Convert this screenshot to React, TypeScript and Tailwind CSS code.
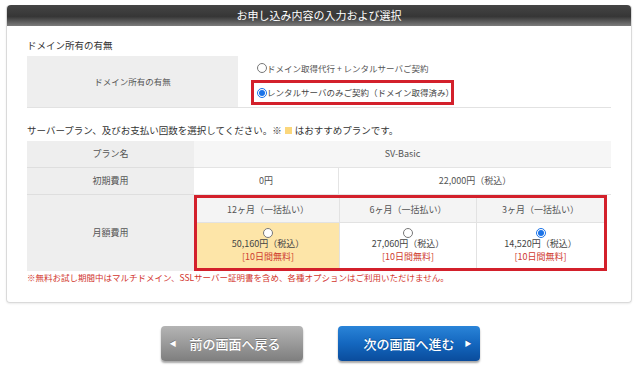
import React from 'react';

const FONT = "font-['Noto_Sans_CJK_JP','Noto_Sans',sans-serif]";

function Radio({ checked = false }: { checked?: boolean }) {
  return checked ? (
    <span className="inline-flex h-[10px] w-[10px] shrink-0 items-center justify-center rounded-full border border-[#1a73e8] bg-white">
      <span className="h-[6px] w-[6px] rounded-full bg-[#1a73e8]" />
    </span>
  ) : (
    <span className="inline-block h-[10px] w-[10px] shrink-0 rounded-full border border-[#777] bg-white" />
  );
}

type Plan = { term: string; price: string; checked?: boolean; recommended?: boolean };

const plans: Plan[] = [
  { term: '12ヶ月（一括払い）', price: '50,160円（税込）', recommended: true },
  { term: '6ヶ月（一括払い）', price: '27,060円（税込）' },
  { term: '3ヶ月（一括払い）', price: '14,520円（税込）', checked: true },
];

export default function App() {
  return (
    <div className={`h-[366px] w-[640px] overflow-hidden bg-white ${FONT}`}>
      <div className="ml-[6px] mt-[5px] h-[298px] w-[626px] rounded-[4px] border border-t-0 border-[#dadada] shadow-[0_1px_2px_rgba(0,0,0,0.08)]">
        <div className="h-[21px] rounded-t-[4px] bg-[linear-gradient(to_bottom,#454545_0%,#363636_55%,#7c7c7c_100%)] text-center text-[11px] leading-[21px] text-white">
          お申し込み内容の入力および選択
        </div>

        <div className="px-[20px]">
          <div className="mt-[12px] text-[9.5px] leading-[14px] text-[#333]">ドメイン所有の有無</div>

          <div className="mt-[4px] grid grid-cols-[211px_1fr] border-b border-[#e2e2e2] text-[8.5px] text-[#555]">
            <div className="flex items-center justify-center bg-[#eeeeee]">ドメイン所有の有無</div>
            <div className="flex flex-col">
              <div className="flex h-[24px] items-center whitespace-nowrap pl-[19px]">
                <Radio />
                <span>ドメイン取得代行 + レンタルサーバご契約</span>
              </div>
              <div className="pl-[13px]">
                <div className="flex h-[25px] w-[203px] items-center whitespace-nowrap border-[3px] border-[#d3202b] px-[3px]">
                  <Radio checked />
                  <span className="text-[#444]">レンタルサーバのみご契約（ドメイン取得済み）</span>
                </div>
              </div>
              <div className="h-[2px]" />
            </div>
          </div>

          <div className="mt-[15px] flex items-center whitespace-nowrap text-[9.5px] leading-[14px] text-[#333]">
            サーバープラン、及びお支払い回数を選択してください。※
            <span className="mx-[3px] inline-block h-[7px] w-[7px] bg-[#fbd77c]" />
            はおすすめプランです。
          </div>

          <div className="mt-[4px] grid grid-cols-[167px_1fr] text-[9px] text-[#555]">
            <div className="flex h-[27px] items-center justify-center border-b border-[#dedede] bg-[#eeeeee]">プラン名</div>
            <div className="flex h-[27px] items-center justify-center border-b border-[#e4e4e4] bg-[#f6f6f6]">SV-Basic</div>

            <div className="flex h-[27px] items-center justify-center border-b border-[#dedede] bg-[#eeeeee]">初期費用</div>
            <div className="flex h-[27px] border-b border-[#e4e4e4]">
              <div className="flex w-[145px] items-center justify-center border-r border-[#e4e4e4]">0円</div>
              <div className="flex flex-1 items-center justify-center">22,000円（税込）</div>
            </div>

            <div className="flex h-[76px] items-center justify-center bg-[#eeeeee]">月額費用</div>
            <div className="pr-[4px]">
              <div className="grid h-[76px] grid-cols-[142px_137px_1fr] border-[3px] border-[#d3202b]">
                {plans.map((p, i) => (
                  <div key={p.term} className={`flex flex-col ${i > 0 ? 'border-l border-[#e2e2e2]' : ''}`}>
                    <div className="flex h-[25px] items-center justify-center border-b border-[#e2e2e2] bg-[#f4f4f4]">
                      {p.term}
                    </div>
                    <div className={`flex flex-1 flex-col items-center pt-[5px] ${p.recommended ? 'bg-[#fde5a8]' : 'bg-white'}`}>
                      <Radio checked={p.checked} />
                      <div className="leading-[12px] text-[#444]">{p.price}</div>
                      <div className="leading-[13px] text-[#cf3b30]">[10日間無料]</div>
                    </div>
                  </div>
                ))}
              </div>
            </div>
          </div>

          <div className="whitespace-nowrap text-[8.5px] leading-[13px] text-[#d2352d]">
            ※無料お試し期間中はマルチドメイン、SSLサーバー証明書を含め、各種オプションはご利用いただけません。
          </div>
        </div>
      </div>

      <div className="mt-[23px] flex justify-center gap-[35px]">
        <button className="relative flex h-[35px] w-[142px] items-center rounded-[4px] bg-[linear-gradient(to_bottom,#b4b4b4_0%,#9a9a9a_50%,#7e7e7e_100%)] pl-[29px] text-[13px] font-medium text-white shadow-[0_2px_2px_rgba(0,0,0,0.35)] [text-shadow:0_-1px_0_rgba(0,0,0,0.25)]">
          <span className="absolute left-[9px] text-[7px]">◀</span>
          前の画面へ戻る
        </button>
        <button className="relative flex h-[35px] w-[142px] items-center rounded-[4px] bg-[linear-gradient(to_bottom,#2a84d8_0%,#1467bf_50%,#0a4c9c_100%)] pl-[26px] text-[13px] font-medium text-white shadow-[0_2px_2px_rgba(0,0,0,0.35)] [text-shadow:0_-1px_0_rgba(0,0,0,0.25)]">
          次の画面へ進む
          <span className="absolute right-[8px] text-[7px]">▶</span>
        </button>
      </div>
    </div>
  );
}
